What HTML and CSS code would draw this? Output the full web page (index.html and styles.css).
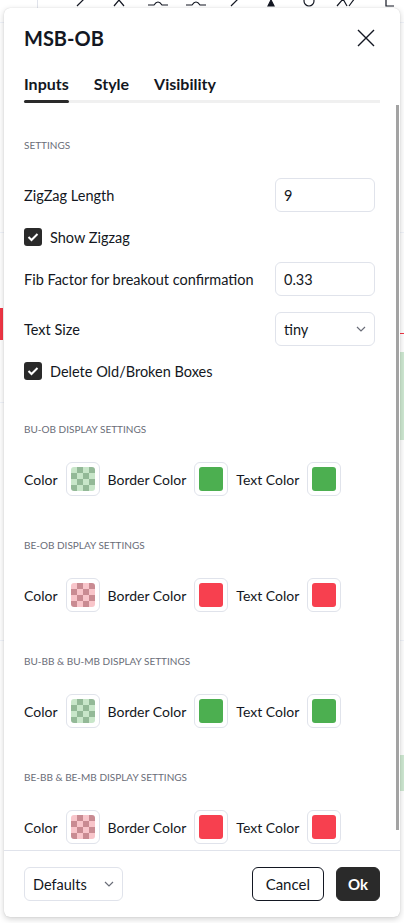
FILE: index.html
```html
<!DOCTYPE html>
<html lang="en">

<head>
    <meta charset="UTF-8">
    <meta name="viewport" content="width=device-width, initial-scale=1.0">
    <title>MSB-OB Settings</title>
    <link rel="stylesheet" href="styles.css">
</head>

<body>

    <!-- chart that sits behind the dialog -->
    <div class="chart">
        <div class="toolbar">
            <span class="tool-sep"></span>
            <svg class="tool t1" width="18" height="18" viewBox="0 0 18 18"><path d="M3 16 L15 4" /></svg>
            <svg class="tool t2" width="18" height="18" viewBox="0 0 18 18"><path d="M4 16 L9 10 L14 16" /></svg>
            <svg class="tool t3" width="22" height="18" viewBox="0 0 22 18"><path d="M1 15 H7 Q11 9 15 15 H21" /></svg>
            <svg class="tool t4" width="22" height="18" viewBox="0 0 22 18"><path d="M1 15 H7 Q11 9 15 15 H21" /></svg>
            <svg class="tool t5" width="18" height="18" viewBox="0 0 18 18"><path d="M4 16 L14 6" /></svg>
            <svg class="tool t6" width="18" height="18" viewBox="0 0 18 18"><path class="fill" d="M6 16 L9 10 L12 16 Z" /></svg>
            <svg class="tool t7" width="18" height="18" viewBox="0 0 18 18"><circle cx="9" cy="11" r="5" /></svg>
            <svg class="tool t8" width="22" height="18" viewBox="0 0 22 18"><path d="M2 16 L8 9 L12 16 M14 16 L20 8" /></svg>
            <svg class="tool t9" width="12" height="18" viewBox="0 0 12 18"><path d="M2 2 V16 H10" /></svg>
        </div>
        <div class="candle"></div>
        <div class="area area-top"></div>
        <div class="area area-bottom"></div>
        <div class="price-line"></div>
    </div>

    <div class="dialog">
        <div class="dialog-header">
            <span class="dialog-title">MSB-OB</span>
            <button class="close-btn" aria-label="Close">
                <svg width="18" height="18" viewBox="0 0 18 18"><path d="M1 1 L17 17 M17 1 L1 17" /></svg>
            </button>
        </div>

        <div class="tabs">
            <div class="tab active">Inputs</div>
            <div class="tab">Style</div>
            <div class="tab">Visibility</div>
        </div>

        <div class="dialog-body">
            <div class="content">
                <div class="group-title first">Settings</div>

                <div class="row">
                    <span>ZigZag Length</span>
                    <div class="field">9</div>
                </div>

                <label class="check">
                    <span class="box"><svg width="12" height="10" viewBox="0 0 12 10"><path d="M1.5 5 L4.5 8 L10.5 2" /></svg></span>
                    Show Zigzag
                </label>

                <div class="row">
                    <span>Fib Factor for breakout confirmation</span>
                    <div class="field">0.33</div>
                </div>

                <div class="row">
                    <span>Text Size</span>
                    <div class="field select">tiny
                        <svg class="chevron" width="10" height="6" viewBox="0 0 10 6"><path d="M1 1 L5 5 L9 1" /></svg>
                    </div>
                </div>

                <label class="check">
                    <span class="box"><svg width="12" height="10" viewBox="0 0 12 10"><path d="M1.5 5 L4.5 8 L10.5 2" /></svg></span>
                    Delete Old/Broken Boxes
                </label>

                <div class="group-title">BU-OB Display Settings</div>
                <div class="color-row">
                    <span>Color</span>
                    <span class="swatch"><span class="chip checker-green"></span></span>
                    <span>Border Color</span>
                    <span class="swatch"><span class="chip green"></span></span>
                    <span>Text Color</span>
                    <span class="swatch"><span class="chip green"></span></span>
                </div>

                <div class="group-title">BE-OB Display Settings</div>
                <div class="color-row">
                    <span>Color</span>
                    <span class="swatch"><span class="chip checker-red"></span></span>
                    <span>Border Color</span>
                    <span class="swatch"><span class="chip red"></span></span>
                    <span>Text Color</span>
                    <span class="swatch"><span class="chip red"></span></span>
                </div>

                <div class="group-title">BU-BB &amp; BU-MB Display Settings</div>
                <div class="color-row">
                    <span>Color</span>
                    <span class="swatch"><span class="chip checker-green"></span></span>
                    <span>Border Color</span>
                    <span class="swatch"><span class="chip green"></span></span>
                    <span>Text Color</span>
                    <span class="swatch"><span class="chip green"></span></span>
                </div>

                <div class="group-title">BE-BB &amp; BE-MB Display Settings</div>
                <div class="color-row">
                    <span>Color</span>
                    <span class="swatch"><span class="chip checker-red"></span></span>
                    <span>Border Color</span>
                    <span class="swatch"><span class="chip red"></span></span>
                    <span>Text Color</span>
                    <span class="swatch"><span class="chip red"></span></span>
                </div>
            </div>
            <div class="scroll-thumb"></div>
        </div>

        <div class="dialog-footer">
            <div class="field select defaults">Defaults
                <svg class="chevron" width="10" height="6" viewBox="0 0 10 6"><path d="M1 1 L5 5 L9 1" /></svg>
            </div>
            <div class="actions">
                <button class="btn btn-outline">Cancel</button>
                <button class="btn btn-dark">Ok</button>
            </div>
        </div>
    </div>

</body>

</html>
```

FILE: styles.css
```css
body {
    font-family: Lato, "Noto Sans", sans-serif;
    font-size: 14.5px;
    color: #131722;
    background-color: #fff;
    margin: 0;
    padding: 8px 4px 0;
    position: relative;
    height: 923px;
    box-sizing: border-box;
    overflow: hidden;
}

/* chart behind */
.chart {
    position: absolute;
    inset: 0;
    background:
        linear-gradient(#f0f3fa, #f0f3fa) 0 22px / 100% 1px no-repeat,
        linear-gradient(#f0f3fa, #f0f3fa) 0 232px / 100% 1px no-repeat,
        linear-gradient(#f0f3fa, #f0f3fa) 0 402px / 100% 1px no-repeat,
        linear-gradient(#f0f3fa, #f0f3fa) 0 640px / 100% 1px no-repeat,
        #fff;
}

.toolbar {
    position: absolute;
    top: -10px;
    left: 0;
    right: 0;
    height: 18px;
}

.tool {
    position: absolute;
    top: 0;
    fill: none;
    stroke: #131722;
    stroke-width: 1.2;
}

.tool .fill { fill: #131722; }

.tool-sep {
    position: absolute;
    left: 37px;
    top: 0;
    width: 1px;
    height: 18px;
    background: #e0e3eb;
}

.t1 { left: 74px; }
.t2 { left: 110px; }
.t3 { left: 147px; }
.t4 { left: 185px; }
.t5 { left: 227px; }
.t6 { left: 262px; }
.t7 { left: 300px; }
.t8 { left: 335px; }
.t9 { left: 384px; }

.candle {
    position: absolute;
    left: 0;
    top: 308px;
    width: 3px;
    height: 32px;
    background: #f23645;
}

.area {
    position: absolute;
    right: 0;
    width: 4px;
    background: #cfe9d2;
    border-left: 1px solid #4caf50;
}

.area-top { top: 352px; height: 88px; }
.area-bottom { top: 755px; height: 36px; }

.price-line {
    position: absolute;
    right: 0;
    top: 333px;
    width: 4px;
    height: 1px;
    background: #f23645;
}

/* dialog */
.dialog {
    position: relative;
    z-index: 1;
    width: 396px;
    height: 909px;
    background: #fff;
    border-radius: 6px;
    box-shadow: 0 2px 6px rgba(0, 0, 0, 0.18), 0 0 1px rgba(0, 0, 0, 0.2);
    display: flex;
    flex-direction: column;
}

.dialog-header {
    height: 60px;
    padding: 0 25px 0 20px;
    display: flex;
    justify-content: space-between;
    align-items: center;
    flex-shrink: 0;
}

.dialog-title {
    font-size: 20px;
    font-weight: 700;
}

.close-btn {
    border: none;
    background: none;
    padding: 0;
    width: 18px;
    height: 18px;
    cursor: pointer;
}

.close-btn svg {
    display: block;
    fill: none;
    stroke: #131722;
    stroke-width: 1.4;
}

.tabs {
    display: flex;
    gap: 25px;
    margin: 0 20px;
    flex-shrink: 0;
    background: linear-gradient(#f0f0f0, #f0f0f0) bottom / 100% 3px no-repeat;
}

.tab {
    font-size: 16px;
    font-weight: 700;
    line-height: 22px;
    padding-top: 5px;
}

.tab::after {
    content: "";
    display: block;
    margin-top: 5px;
    height: 3px;
    border-radius: 2px;
}

.tab.active::after {
    background: #2a2a2a;
}

.dialog-body {
    flex: 1;
    position: relative;
    overflow: hidden;
}

.content {
    padding: 34px 25px 0 20px;
    display: flex;
    flex-direction: column;
    gap: 16px;
}

.scroll-thumb {
    position: absolute;
    right: 1px;
    top: 2px;
    bottom: 20px;
    width: 3px;
    background: #a3a3a3;
}

.group-title {
    font-size: 10px;
    line-height: 16px;
    text-transform: uppercase;
    color: #6a6d78;
    margin-top: 25px;
    margin-bottom: 9px;
}

.group-title.first {
    margin-top: 0;
}

.row {
    display: flex;
    justify-content: space-between;
    align-items: center;
    height: 34px;
}

.field {
    box-sizing: border-box;
    width: 100px;
    height: 34px;
    border: 1px solid #e0e3eb;
    border-radius: 6px;
    padding: 0 8px;
    display: flex;
    align-items: center;
    justify-content: space-between;
}

.chevron {
    fill: none;
    stroke: #6a6d78;
    stroke-width: 1.2;
}

.check {
    display: flex;
    align-items: center;
    gap: 8px;
    height: 18px;
}

.box {
    width: 18px;
    height: 18px;
    border-radius: 3px;
    background: #2a2a2a;
    display: flex;
    align-items: center;
    justify-content: center;
}

.box svg {
    fill: none;
    stroke: #fff;
    stroke-width: 2;
}

.color-row {
    display: flex;
    align-items: center;
    gap: 8px;
    height: 34px;
    font-size: 14px;
}

.swatch {
    box-sizing: border-box;
    width: 34px;
    height: 34px;
    border: 1px solid #e0e3eb;
    border-radius: 6px;
    display: flex;
    align-items: center;
    justify-content: center;
}

.chip {
    width: 24px;
    height: 24px;
    border-radius: 3px;
}

.green { background: #4caf50; }
.red { background: #f7404f; }

.checker-green {
    background: repeating-conic-gradient(#93b997 0 25%, #c8e6c9 0 50%) 0 0 / 12px 12px;
}

.checker-red {
    background: repeating-conic-gradient(#c98b92 0 25%, #f8c5ca 0 50%) 0 0 / 12px 12px;
}

.dialog-footer {
    flex-shrink: 0;
    border-top: 1px solid #e0e3eb;
    padding: 16px 20px 16px;
    display: flex;
    justify-content: space-between;
    align-items: center;
}

.defaults {
    width: 99px;
}

.actions {
    display: flex;
    gap: 12px;
}

.btn {
    font-family: inherit;
    font-size: 15px;
    height: 34px;
    border-radius: 6px;
    padding: 0 13px;
    cursor: pointer;
}

.btn-outline {
    background: #fff;
    border: 1px solid #131722;
    color: #131722;
}

.btn-dark {
    background: #2a2a2a;
    border: 1px solid #2a2a2a;
    color: #fff;
    font-weight: 700;
    padding: 0 11px;
}
```
